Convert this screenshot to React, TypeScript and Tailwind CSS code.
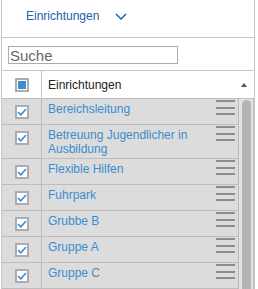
import { useState } from "react";

const items = [
  "Bereichsleitung",
  "Betreuung Jugendlicher in Ausbildung",
  "Flexible Hilfen",
  "Fuhrpark",
  "Grubbe B",
  "Gruppe A",
  "Gruppe C",
];

function CheckBox({ mode }: { mode: "check" | "partial" }) {
  return (
    <div className="flex h-[14px] w-[14px] items-center justify-center border-2 border-[#acacac] bg-white">
      {mode === "partial" ? (
        <div className="h-[8px] w-[8px] bg-[#3b8ed4]" />
      ) : (
        <svg width="10" height="8" viewBox="0 0 10 8" fill="none">
          <path d="M1 4.2 L3.8 6.8 L9 1" stroke="#3b8ed4" strokeWidth="1.6" />
        </svg>
      )}
    </div>
  );
}

function Handle() {
  return (
    <div className="absolute right-[3px] top-[1px] flex w-[19px] flex-col gap-[4.5px]">
      <div className="h-[2px] bg-[#8c8c8c]" />
      <div className="h-[2px] bg-[#8c8c8c]" />
      <div className="h-[2px] bg-[#8c8c8c]" />
    </div>
  );
}

export default function App() {
  const [query, setQuery] = useState("");
  return (
    <div className="h-[289px] w-[258px] overflow-hidden bg-white font-['Liberation_Sans',Arial,sans-serif] text-[12px]">
      <div className="ml-px h-full w-[254px] border-x border-[#c6c6c6]">
        <div className="flex h-[38px] items-start border-b border-[#c6c6c6] pl-[24px] pt-[9px]">
          <span className="leading-[14px] text-[#2160ae]">Einrichtungen</span>
          <svg className="ml-[16px] mt-[4px]" width="12" height="7" viewBox="0 0 12 7" fill="none">
            <path d="M1 1 L6 6 L11 1" stroke="#2160ae" strokeWidth="1.5" />
          </svg>
        </div>

        <div className="pb-[6px] pl-[6px] pt-[8px]">
          <input
            value={query}
            onChange={(e) => setQuery(e.target.value)}
            placeholder="Suche"
            className="block h-[18px] w-[170px] border border-[#ababab] pl-[1px] text-[15px] leading-[16px] text-[#333] outline-none placeholder:text-[#666]"
          />
        </div>

        <div className="border-t border-[#c6c6c6]">
          <div className="flex h-[28px] border-b border-[#bdbdbd] bg-white">
            <div className="flex w-[40px] items-center justify-center border-r border-[#c6c6c6]">
              <CheckBox mode="partial" />
            </div>
            <div className="relative flex flex-1 items-center pl-[6px] text-[#222]">
              Einrichtungen
              <svg className="absolute right-[7px] top-[12px]" width="6" height="4" viewBox="0 0 6 4">
                <path d="M0 4 L3 0 L6 4 Z" fill="#555" />
              </svg>
            </div>
          </div>

          <div className="flex">
            <div className="w-[237px] border-r border-[#b8b8b8] bg-[#dcdcdc]">
              {items.map((name) => (
                <div key={name} className="flex min-h-[26px] border-b border-[#bdbdbd]">
                  <div className="flex w-[40px] justify-center border-r border-[#bdbdbd] pt-[6px]">
                    <CheckBox mode="check" />
                  </div>
                  <div className="relative flex-1 pb-[2px] pl-[6px] pr-[34px] pt-[3px] leading-[14px] text-[#3a8ccf]">
                    {name}
                    <Handle />
                  </div>
                </div>
              ))}
              <div className="flex h-[20px]">
                <div className="w-[40px] border-r border-[#bdbdbd]" />
              </div>
            </div>
            <div className="flex flex-1 justify-center border-r border-[#bdbdbd] bg-[#e4e4e4] pt-px">
              <div className="h-[260px] w-[9px] rounded-t-full bg-[#b3b3b3]" />
            </div>
          </div>
        </div>
      </div>
    </div>
  );
}
